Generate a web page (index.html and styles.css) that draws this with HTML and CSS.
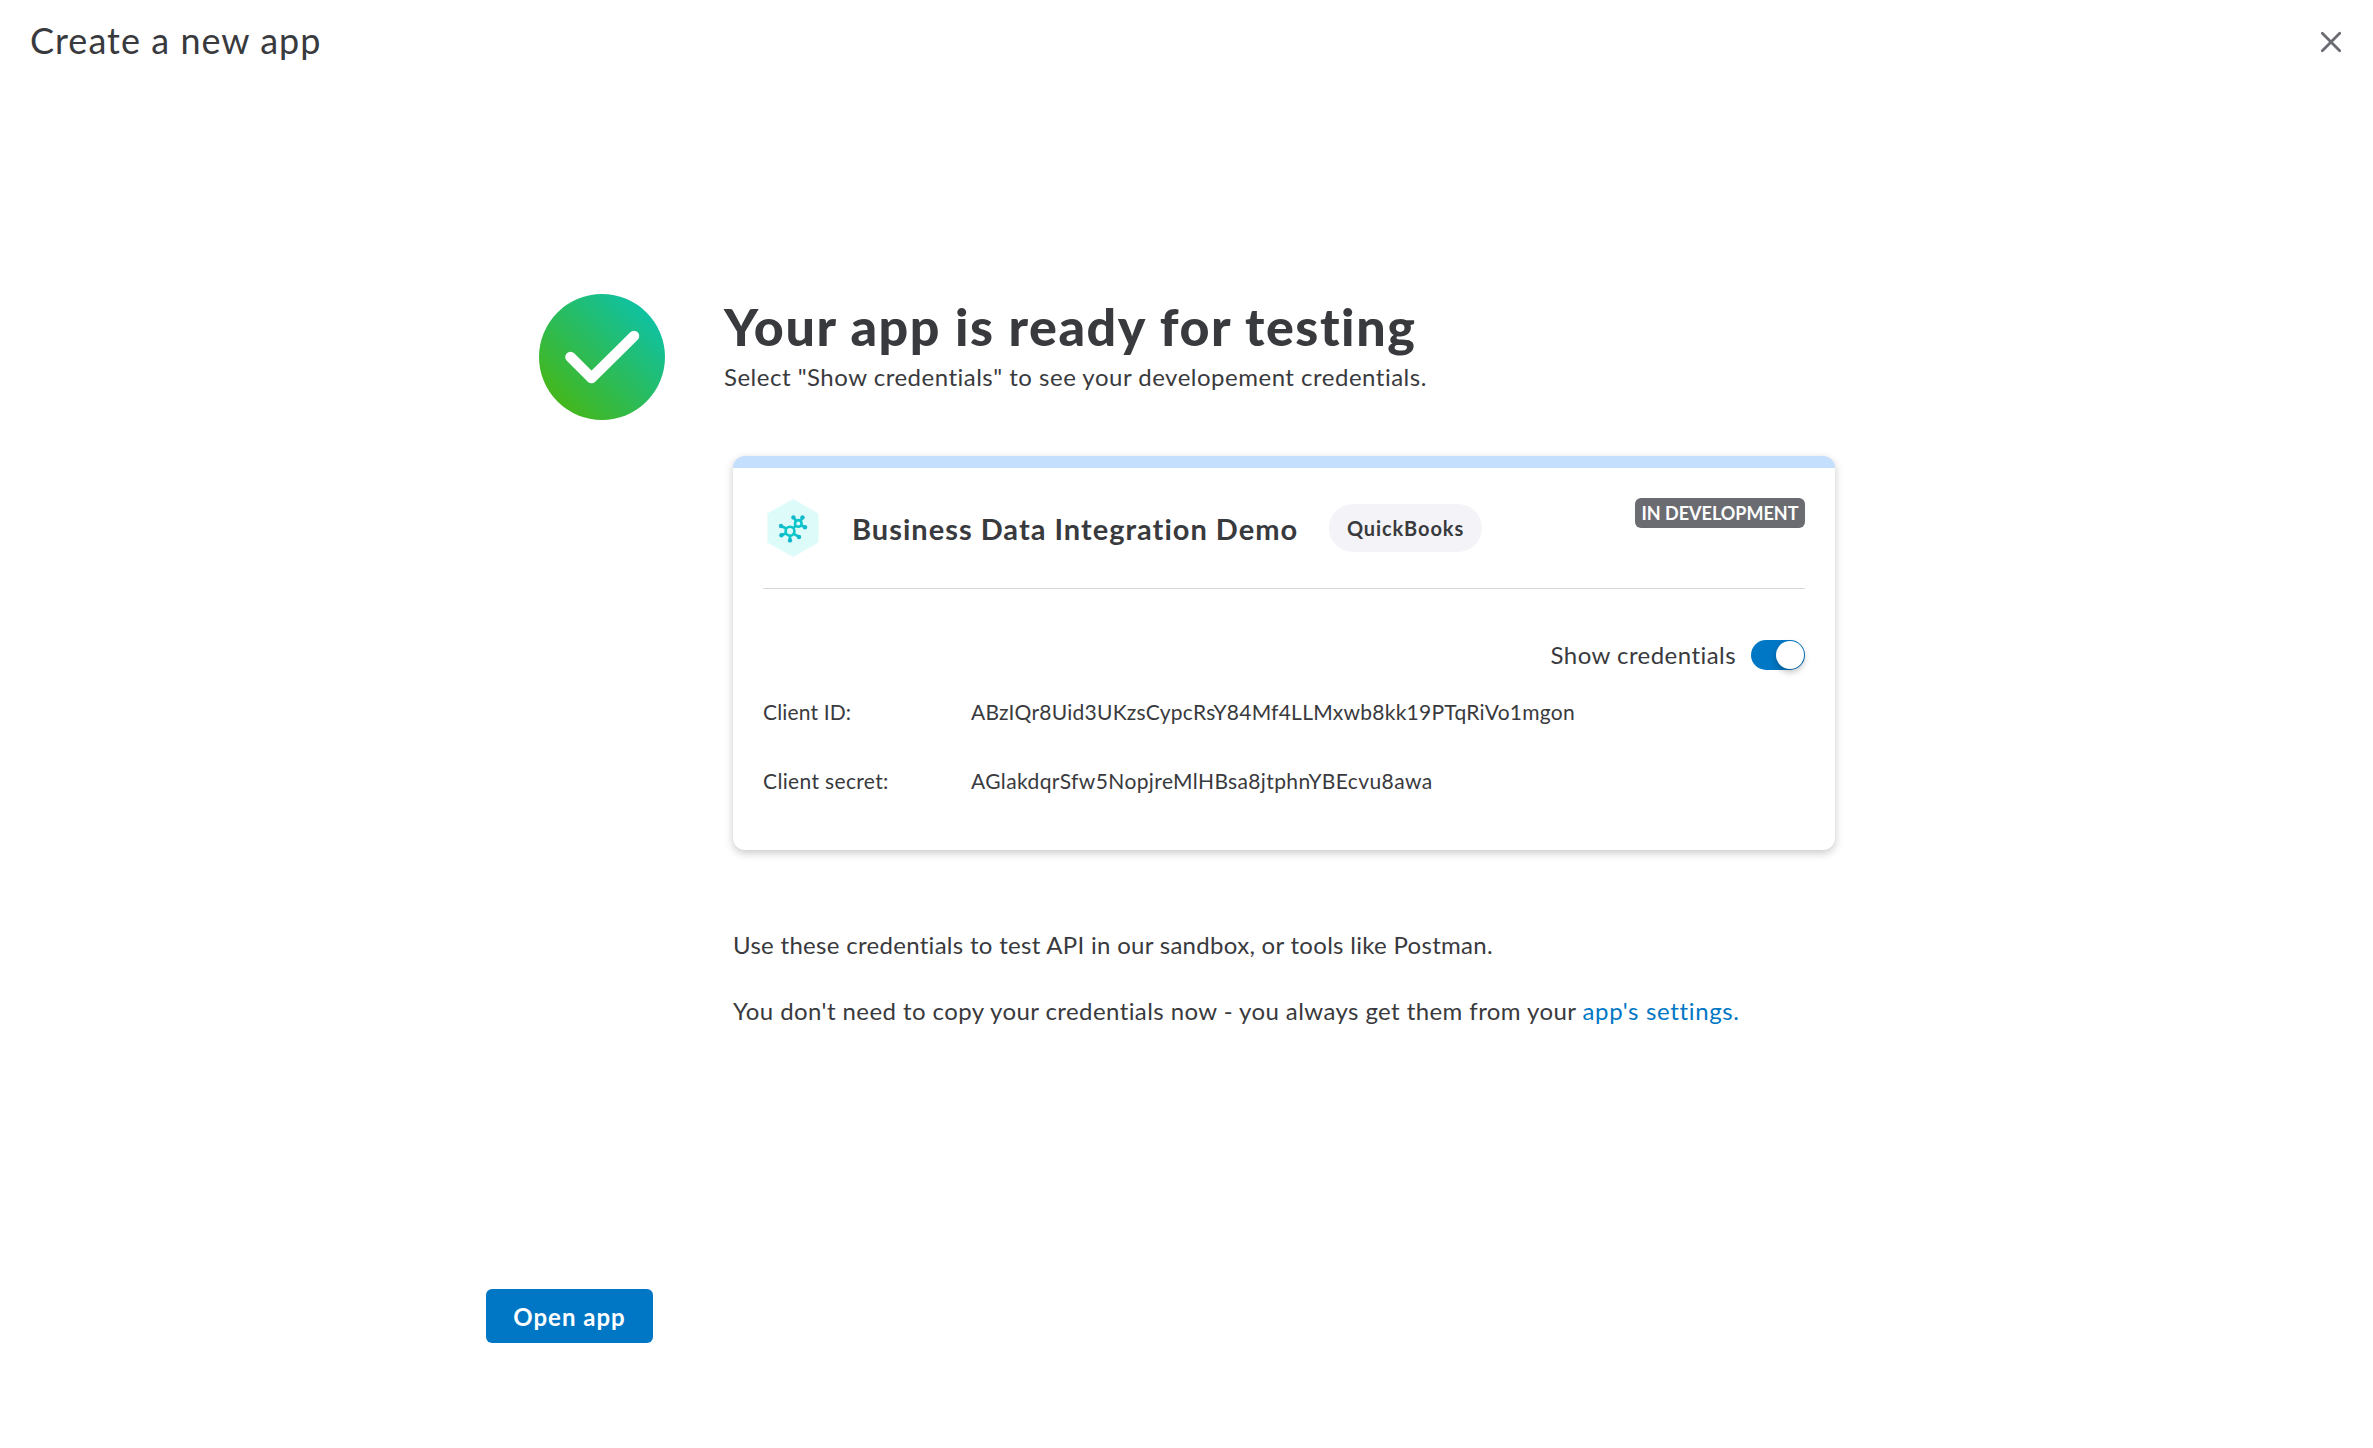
FILE: index.html
```html
<!DOCTYPE html>
<html lang="en">
<head>
<meta charset="utf-8">
<title>Create a new app</title>
<link rel="stylesheet" href="styles.css">
</head>
<body>
<header class="topbar">
  <h2 class="topbar-title">Create a new app</h2>
  <button class="close" aria-label="Close">
    <svg width="24" height="24" viewBox="0 0 24 24"><path d="M3.3 3.3 20.7 20.7M20.7 3.3 3.3 20.7" fill="none" stroke="#6b6c72" stroke-width="2.8" stroke-linecap="round"/></svg>
  </button>
</header>
<main class="content">
  <svg class="success" width="126" height="126" viewBox="0 0 126 126">
    <defs><linearGradient id="green" x1="0.15" y1="0.85" x2="0.85" y2="0.15"><stop offset="0" stop-color="#43b71d"/><stop offset="1" stop-color="#10c1a0"/></linearGradient></defs>
    <circle cx="63" cy="63" r="63" fill="url(#green)"/>
    <path d="M31.5 63 52.5 84 95 42" fill="none" stroke="#fff" stroke-width="10.5" stroke-linecap="round" stroke-linejoin="round"/>
  </svg>
  <div class="details">
    <h1 class="heading">Your app is ready for testing</h1>
    <p class="subheading">Select "Show credentials" to see your developement credentials.</p>
    <section class="card">
      <div class="card-head">
        <svg class="app-icon" width="52" height="58" viewBox="0 0 52 58">
          <path d="M26 0 51.5 14.5V43.5L26 58 .5 43.5V14.5Z" fill="#dcfbf9"/>
          <g fill="none" stroke="#0cc5cb" stroke-width="2.6">
            <circle cx="23" cy="32.2" r="4.4"/><circle cx="31.3" cy="24.4" r="3.3"/>
            <path d="M19.5 29.5 14.5 27.2M19.2 34.2 14.5 36.2M23 36.5V40.5M26.5 34.7 31.5 37.7M26 29.2 29 26.5M29 22 26.8 18.8M33.5 22 35.5 18.8M33.8 26 37.5 28"/>
          </g>
          <g fill="#14b8cd"><circle cx="14" cy="27" r="2.2"/><circle cx="14.4" cy="36.3" r="2.2"/><circle cx="23" cy="41.4" r="2.2"/><circle cx="32" cy="38" r="2.2"/><circle cx="26.4" cy="18.4" r="2.2"/><circle cx="35.5" cy="18.4" r="2.2"/><circle cx="38" cy="28.2" r="2.2"/></g>
        </svg>
        <h3 class="app-name">Business Data Integration Demo</h3>
        <span class="pill">QuickBooks</span>
        <span class="badge">IN DEVELOPMENT</span>
      </div>
      <div class="toggle-row">
        <span class="toggle-label">Show credentials</span>
        <span class="toggle"><span class="knob"></span></span>
      </div>
      <dl class="credentials">
        <dt class="id-label">Client ID:</dt><dd class="id-value">ABzIQr8Uid3UKzsCypcRsY84Mf4LLMxwb8kk19PTqRiVo1mgon</dd>
        <dt class="secret-label">Client secret:</dt><dd class="secret-value">AGlakdqrSfw5NopjreMlHBsa8jtphnYBEcvu8awa</dd>
      </dl>
    </section>
    <p class="note note-use">Use these credentials to test API in our sandbox, or tools like Postman.</p>
    <p class="note note-copy">You don't need to copy your credentials now - you always get them from your <a class="link" href="#">app's settings.</a></p>
  </div>
</main>
<footer class="actions"><button class="primary">Open app</button></footer>
</body>
</html>
```
FILE: styles.css
```css
* { box-sizing: border-box; margin: 0; padding: 0; }
body { min-height: 1448px; background: #fff; color: #393a3d; font-family: Lato, "Liberation Sans", sans-serif; font-variant-ligatures: none; display: flex; flex-direction: column; }
button { border: 0; background: none; font: inherit; }
.topbar { height: 84px; padding: 0 30px; display: flex; justify-content: space-between; align-items: center; }
.topbar-title { font-size: 36px; line-height: 44px; font-weight: 400; letter-spacing: 1.03px; padding-bottom: 5px; }
.close { width: 24px; height: 24px; }
.close svg { display: block; }
.content { padding: 210px 0 0 539px; display: grid; grid-template-columns: 126px 1111px; column-gap: 59px; }
.heading { font-size: 52px; line-height: 60px; font-weight: 900; letter-spacing: 1.55px; margin-top: 2px; white-space: nowrap; }
.subheading { font-size: 24px; line-height: 30px; letter-spacing: .5px; margin-top: 6px; white-space: nowrap; }
.card { margin: 64px 0 0 9px; padding: 0 30px 54px; border-top: 12px solid #c4defd; border-radius: 12px; background: #fff; box-shadow: 0 3px 9px rgba(0,0,0,.22); }
.card-head { height: 121px; display: flex; align-items: center; border-bottom: 1px solid #d4d7dc; white-space: nowrap; }
.app-icon { margin-left: 4px; }
.app-name { margin-left: 33px; width: 446px; font-size: 29px; font-weight: 700; letter-spacing: 1px; }
.pill { margin-left: 31px; width: 153px; height: 48px; border-radius: 24px; background: #f4f4f8; display: flex; align-items: center; justify-content: center; font-size: 20px; font-weight: 700; letter-spacing: .9px; }
.badge { margin: 30px 0 0 auto; align-self: flex-start; width: 170px; height: 30px; padding-bottom: 1px; border-radius: 6px; background: #6b6c72; color: #fff; display: flex; align-items: center; justify-content: center; font-size: 18px; font-weight: 700; }
.toggle-row { margin-top: 51px; height: 30px; display: flex; justify-content: flex-end; align-items: center; gap: 15px; }
.toggle-label { font-size: 24px; letter-spacing: .45px; padding-bottom: 2px; }
.toggle { width: 54px; height: 30px; padding: 1px; border-radius: 15px; background: #0077c5; display: flex; justify-content: flex-end; }
.knob { width: 28px; height: 28px; border-radius: 50%; background: #fff; box-shadow: 0 3px 6px rgba(0,0,0,.25); }
.credentials { margin-top: 27px; display: grid; grid-template-columns: 208px 1fr; row-gap: 39px; font-size: 21px; line-height: 30px; }
.id-label { letter-spacing: .15px; }
.id-value { letter-spacing: .25px; }
.secret-label { letter-spacing: .35px; }
.secret-value { letter-spacing: .39px; }
.note { margin-left: 9px; font-size: 24px; line-height: 30px; white-space: nowrap; }
.note-use { margin-top: 80px; letter-spacing: .3px; }
.note-copy { margin-top: 36px; letter-spacing: .42px; }
.link { color: #0077c5; letter-spacing: .65px; text-decoration: none; }
.actions { padding: 263px 0 0 486px; }
.primary { width: 167px; height: 54px; border-radius: 6px; background: #0077c5; color: #fff; font-size: 24px; font-weight: 700; letter-spacing: 1px; }
```
